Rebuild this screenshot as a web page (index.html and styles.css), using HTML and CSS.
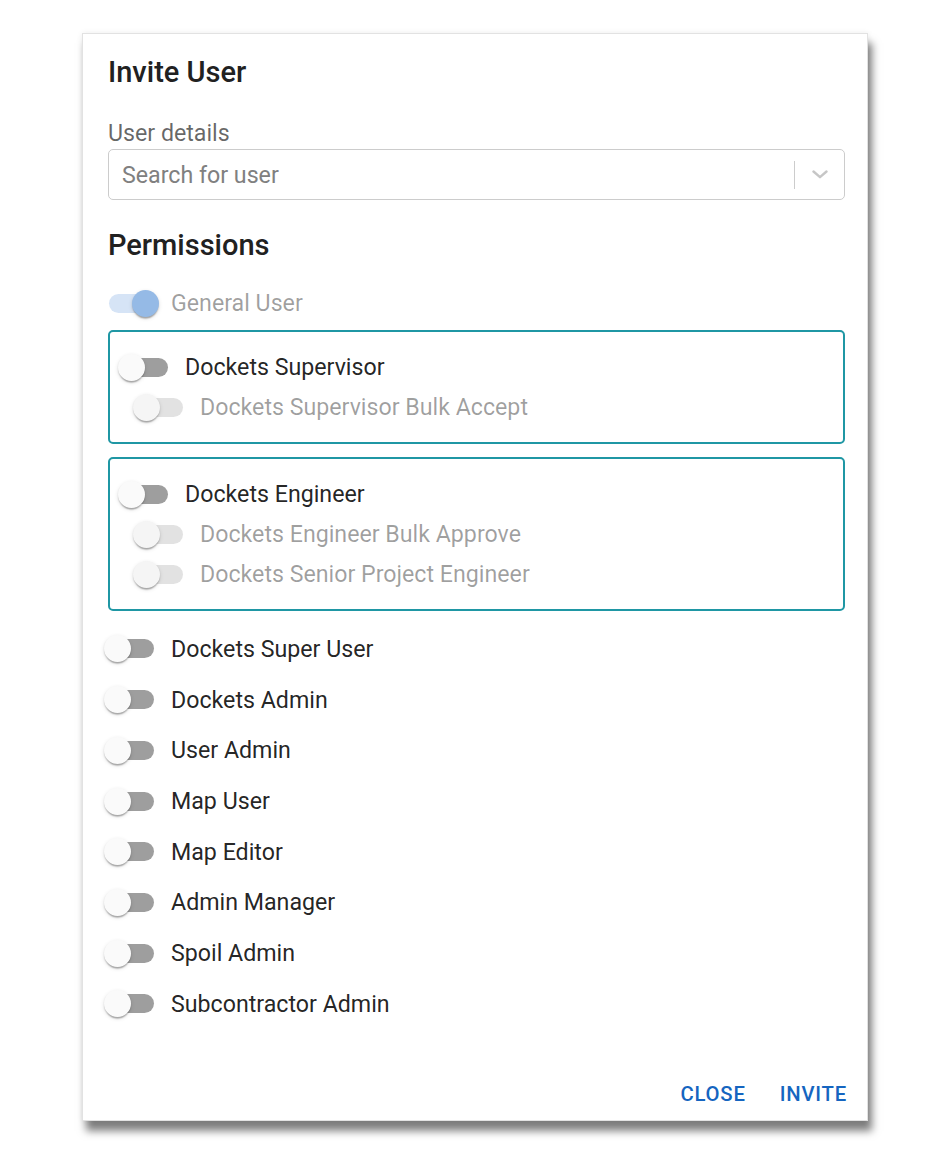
FILE: index.html
```html
<!DOCTYPE html>
<html lang="en">
<head>
<meta charset="utf-8">
<title>Invite User</title>
<link rel="stylesheet" href="styles.css">
</head>
<body>
<div class="dialog">
  <h2 class="dialog-title">Invite User</h2>
  <div class="field-label">User details</div>
  <div class="select">
    <span class="placeholder">Search for user</span>
    <span class="separator"></span>
    <span class="indicator">
      <svg width="16" height="9" viewBox="0 0 16 9"><path d="M1.5 1.5 L8 7.2 L14.5 1.5" fill="none" stroke="#c6c6c6" stroke-width="2.4" stroke-linecap="round" stroke-linejoin="round"/></svg>
    </span>
  </div>
  <h3 class="section-title">Permissions</h3>

  <div class="row general">
    <span class="switch checked disabled"><span class="track"></span><span class="thumb"></span></span>
    <span class="label disabled-text">General User</span>
  </div>

  <div class="group">
    <div class="row">
      <span class="switch"><span class="track"></span><span class="thumb"></span></span>
      <span class="label">Dockets Supervisor</span>
    </div>
    <div class="row sub">
      <span class="switch disabled"><span class="track"></span><span class="thumb"></span></span>
      <span class="label disabled-text">Dockets Supervisor Bulk Accept</span>
    </div>
  </div>

  <div class="group">
    <div class="row">
      <span class="switch"><span class="track"></span><span class="thumb"></span></span>
      <span class="label">Dockets Engineer</span>
    </div>
    <div class="row sub">
      <span class="switch disabled"><span class="track"></span><span class="thumb"></span></span>
      <span class="label disabled-text">Dockets Engineer Bulk Approve</span>
    </div>
    <div class="row sub">
      <span class="switch disabled"><span class="track"></span><span class="thumb"></span></span>
      <span class="label disabled-text">Dockets Senior Project Engineer</span>
    </div>
  </div>

  <div class="outer-rows">
    <div class="row outer">
      <span class="switch"><span class="track"></span><span class="thumb"></span></span>
      <span class="label">Dockets Super User</span>
    </div>
    <div class="row outer">
      <span class="switch"><span class="track"></span><span class="thumb"></span></span>
      <span class="label">Dockets Admin</span>
    </div>
    <div class="row outer">
      <span class="switch"><span class="track"></span><span class="thumb"></span></span>
      <span class="label">User Admin</span>
    </div>
    <div class="row outer">
      <span class="switch"><span class="track"></span><span class="thumb"></span></span>
      <span class="label">Map User</span>
    </div>
    <div class="row outer">
      <span class="switch"><span class="track"></span><span class="thumb"></span></span>
      <span class="label">Map Editor</span>
    </div>
    <div class="row outer">
      <span class="switch"><span class="track"></span><span class="thumb"></span></span>
      <span class="label">Admin Manager</span>
    </div>
    <div class="row outer">
      <span class="switch"><span class="track"></span><span class="thumb"></span></span>
      <span class="label">Spoil Admin</span>
    </div>
    <div class="row outer">
      <span class="switch"><span class="track"></span><span class="thumb"></span></span>
      <span class="label">Subcontractor Admin</span>
    </div>
  </div>

  <div class="actions">
    <button class="btn">CLOSE</button>
    <button class="btn">INVITE</button>
  </div>
</div>
</body>
</html>
```

FILE: styles.css
```css
html, body {
  margin: 0;
  background: #ffffff;
}

body {
  padding: 33px 0 20px 82px;
  font-family: Roboto, "Noto Sans", "Liberation Sans", sans-serif;
  color: rgba(0, 0, 0, 0.87);
}

.dialog {
  width: 786px;
  box-sizing: border-box;
  background: #ffffff;
  border: 1px solid #e2e2e2;
  padding: 16px 22px 4px 25px;
  box-shadow: 0 0 6px rgba(0, 0, 0, 0.07), 4px 10px 8px rgba(0, 0, 0, 0.5);
}

.dialog-title {
  margin: 0;
  height: 44px;
  line-height: 44px;
  font-size: 29px;
  font-weight: 500;
  color: #212121;
}

.field-label {
  margin-top: 23px;
  height: 32px;
  line-height: 32px;
  font-size: 23.2px;
  color: rgba(0, 0, 0, 0.6);
}

.select {
  height: 51px;
  box-sizing: border-box;
  border: 1px solid #cccccc;
  border-radius: 5px;
  display: flex;
  align-items: center;
  padding-left: 13px;
}

.placeholder {
  flex: 1;
  font-size: 23.2px;
  color: #808080;
}

.separator {
  width: 1px;
  height: 28px;
  background: #cccccc;
}

.indicator {
  width: 49px;
  display: flex;
  justify-content: center;
  align-items: center;
}

.indicator svg {
  display: block;
}

.section-title {
  margin: 23px 0 0;
  height: 44px;
  line-height: 44px;
  font-size: 29px;
  font-weight: 500;
  color: #212121;
}

.row {
  display: flex;
  align-items: center;
  height: 40px;
}

.row.general {
  margin-top: 16px;
  margin-left: -3px;
}

.row.sub {
  padding-left: 15px;
}

.label {
  margin-left: 13px;
  font-size: 23.2px;
  white-space: nowrap;
}

.row.general .label {
  margin-left: 12px;
}

.disabled-text {
  color: rgba(0, 0, 0, 0.38);
}

.group {
  margin-top: 7px;
  border: 2px solid #1f97a4;
  border-radius: 5px;
  padding: 15px 0 15px 8px;
}

.group + .group {
  margin-top: 13px;
}

.outer-rows {
  margin-top: 12.6px;
}

.row.outer {
  height: 50.7px;
  margin-left: -4px;
}

/* switch */
.switch {
  position: relative;
  flex: none;
  width: 54px;
  height: 27px;
}

.switch .track {
  position: absolute;
  left: 4px;
  top: 4px;
  width: 46px;
  height: 19px;
  border-radius: 10px;
  background: #9e9e9e;
}

.switch .thumb {
  position: absolute;
  left: 0;
  top: 0;
  width: 27px;
  height: 27px;
  border-radius: 50%;
  background: #fafafa;
  box-shadow: 0 3px 1.5px -1.5px rgba(0, 0, 0, 0.2), 0 1.5px 1.5px 0 rgba(0, 0, 0, 0.14), 0 1.5px 4px 0 rgba(0, 0, 0, 0.12);
}

.switch.disabled .track {
  background: #e2e2e2;
}

.switch.disabled .thumb {
  background: #f5f5f5;
}

.switch.checked .thumb {
  left: 27px;
  background: #95bae6;
}

.switch.checked .track {
  background: #d6e4f6;
}

.actions {
  margin-top: 43px;
  margin-right: -2px;
  height: 44px;
  display: flex;
  justify-content: flex-end;
  align-items: center;
  gap: 34px;
}

.btn {
  border: 0;
  background: none;
  padding: 0;
  margin: 0;
  font-family: Roboto, "Noto Sans", "Liberation Sans", sans-serif;
  font-size: 20.3px;
  font-weight: 500;
  letter-spacing: 0.8px;
  color: #1565c0;
  cursor: pointer;
  line-height: 44px;
}
```
